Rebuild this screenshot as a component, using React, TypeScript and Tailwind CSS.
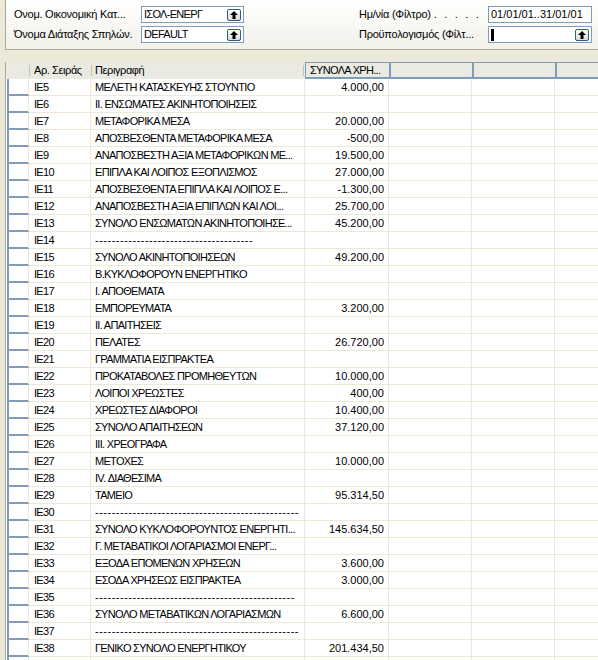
import React from 'react';

type Row = { code: string; text: string; amount?: string };

const rows: Row[] = [
  { code: 'IE5', text: 'ΜΕΛΕΤΗ ΚΑΤΑΣΚΕΥΗΣ ΣΤΟΥΝΤΙΟ', amount: '4.000,00' },
  { code: 'IE6', text: 'II. ΕΝΣΩΜΑΤΕΣ ΑΚΙΝΗΤΟΠΟΙΗΣΕΙΣ' },
  { code: 'IE7', text: 'ΜΕΤΑΦΟΡΙΚΑ ΜΕΣΑ', amount: '20.000,00' },
  { code: 'IE8', text: 'ΑΠΟΣΒΕΣΘΕΝΤΑ ΜΕΤΑΦΟΡΙΚΑ ΜΕΣΑ', amount: '-500,00' },
  { code: 'IE9', text: 'ΑΝΑΠΟΣΒΕΣΤΗ ΑΞΙΑ ΜΕΤΑΦΟΡΙΚΩΝ ΜΕ...', amount: '19.500,00' },
  { code: 'IE10', text: 'ΕΠΙΠΛΑ ΚΑΙ ΛΟΙΠΟΣ ΕΞΟΠΛΙΣΜΟΣ', amount: '27.000,00' },
  { code: 'IE11', text: 'ΑΠΟΣΒΕΣΘΕΝΤΑ ΕΠΙΠΛΑ ΚΑΙ ΛΟΙΠΟΣ Ε...', amount: '-1.300,00' },
  { code: 'IE12', text: 'ΑΝΑΠΟΣΒΕΣΤΗ ΑΞΙΑ ΕΠΙΠΛΩΝ ΚΑΙ ΛΟΙ...', amount: '25.700,00' },
  { code: 'IE13', text: 'ΣΥΝΟΛΟ ΕΝΣΩΜΑΤΩΝ ΑΚΙΝΗΤΟΠΟΙΗΣΕ...', amount: '45.200,00' },
  { code: 'IE14', text: '-'.repeat(38) },
  { code: 'IE15', text: 'ΣΥΝΟΛΟ ΑΚΙΝΗΤΟΠΟΙΗΣΕΩΝ', amount: '49.200,00' },
  { code: 'IE16', text: 'Β.ΚΥΚΛΟΦΟΡΟΥΝ ΕΝΕΡΓΗΤΙΚΟ' },
  { code: 'IE17', text: 'Ι. ΑΠΟΘΕΜΑΤΑ' },
  { code: 'IE18', text: 'ΕΜΠΟΡΕΥΜΑΤΑ', amount: '3.200,00' },
  { code: 'IE19', text: 'ΙΙ. ΑΠΑΙΤΗΣΕΙΣ' },
  { code: 'IE20', text: 'ΠΕΛΑΤΕΣ', amount: '26.720,00' },
  { code: 'IE21', text: 'ΓΡΑΜΜΑΤΙΑ ΕΙΣΠΡΑΚΤΕΑ' },
  { code: 'IE22', text: 'ΠΡΟΚΑΤΑΒΟΛΕΣ ΠΡΟΜΗΘΕΥΤΩΝ', amount: '10.000,00' },
  { code: 'IE23', text: 'ΛΟΙΠΟΙ ΧΡΕΩΣΤΕΣ', amount: '400,00' },
  { code: 'IE24', text: 'ΧΡΕΩΣΤΕΣ ΔΙΑΦΟΡΟΙ', amount: '10.400,00' },
  { code: 'IE25', text: 'ΣΥΝΟΛΟ ΑΠΑΙΤΗΣΕΩΝ', amount: '37.120,00' },
  { code: 'IE26', text: 'ΙΙΙ. ΧΡΕΟΓΡΑΦΑ' },
  { code: 'IE27', text: 'ΜΕΤΟΧΕΣ', amount: '10.000,00' },
  { code: 'IE28', text: 'IV. ΔΙΑΘΕΣΙΜΑ' },
  { code: 'IE29', text: 'ΤΑΜΕΙΟ', amount: '95.314,50' },
  { code: 'IE30', text: '-'.repeat(49) },
  { code: 'IE31', text: 'ΣΥΝΟΛΟ ΚΥΚΛΟΦΟΡΟΥΝΤΟΣ ΕΝΕΡΓΗΤΙ...', amount: '145.634,50' },
  { code: 'IE32', text: 'Γ. ΜΕΤΑΒΑΤΙΚΟΙ ΛΟΓΑΡΙΑΣΜΟΙ ΕΝΕΡΓ...' },
  { code: 'IE33', text: 'ΕΞΟΔΑ ΕΠΟΜΕΝΩΝ ΧΡΗΣΕΩΝ', amount: '3.600,00' },
  { code: 'IE34', text: 'ΕΣΟΔΑ ΧΡΗΣΕΩΣ ΕΙΣΠΡΑΚΤΕΑ', amount: '3.000,00' },
  { code: 'IE35', text: '-'.repeat(48) },
  { code: 'IE36', text: 'ΣΥΝΟΛΟ ΜΕΤΑΒΑΤΙΚΩΝ ΛΟΓΑΡΙΑΣΜΩΝ', amount: '6.600,00' },
  { code: 'IE37', text: '-'.repeat(49) },
  { code: 'IE38', text: 'ΓΕΝΙΚΟ ΣΥΝΟΛΟ ΕΝΕΡΓΗΤΙΚΟΥ', amount: '201.434,50' },
  { code: '', text: '' },
];

function LookupButton() {
  return (
    <span className="flex h-[12px] w-[14px] items-center justify-center rounded-[2px] border border-[#2f5a8c] bg-gradient-to-b from-white to-[#dcdcd4]">
      <svg width="8" height="8" viewBox="0 0 8 8">
        <path d="M4 0 L8 4 L5.5 4 L5.5 8 L2.5 8 L2.5 4 L0 4 Z" fill="#000" />
      </svg>
    </span>
  );
}

function Field({ value, lookup, cursor, width, wide }: { value?: string; lookup?: boolean; cursor?: boolean; width: string; wide?: boolean }) {
  return (
    <div className={`flex h-[17px] items-center justify-between border border-[#7f9db9] bg-white pl-[2px] pr-[2px] ${width}`}>
      <span className={`flex items-center whitespace-nowrap ${wide ? 'tracking-normal' : ''}`}>
        {cursor && <span className="inline-block h-[12px] w-[3px] bg-black" />}
        {value}
      </span>
      {lookup && <LookupButton />}
    </div>
  );
}

function Cell({ w, children, right, last }: { w: string; children?: React.ReactNode; right?: boolean; last?: boolean }) {
  return (
    <div className={`flex h-full items-center overflow-hidden whitespace-nowrap border-b border-[#ece9d8] ${last ? '' : 'border-r'} ${w} ${right ? 'justify-end pr-[4px] tracking-normal' : ''}`}>
      {children}
    </div>
  );
}

export default function App() {
  return (
    <div className="h-[660px] w-[598px] overflow-hidden bg-[#ece9d8] text-[11px] tracking-[-0.7px] text-black" style={{ fontFamily: '"Liberation Sans", Arial, sans-serif' }}>
      <div className="ml-[5px] flex h-[50px] justify-between border-b border-l border-[#a9a89c] bg-gradient-to-b from-white to-[#f2f1ea]">
        <div className="flex flex-col gap-[3px] pl-[8px] pt-[6px]">
          <div className="flex items-center">
            <span className="w-[127px] whitespace-nowrap tracking-[-0.25px]">Ονομ. Οικονομική Κατ...</span>
            <Field value="ΙΣΟΛ-ΕΝΕΡΓ" lookup width="w-[103px]" />
          </div>
          <div className="flex items-center">
            <span className="w-[127px] whitespace-nowrap tracking-[-0.25px]">Όνομα Διάταξης Σπηλών.</span>
            <Field value="DEFAULT" lookup width="w-[103px]" />
          </div>
        </div>
        <div className="flex flex-col gap-[3px] pr-[6px] pt-[6px]">
          <div className="flex items-center">
            <span className="w-[129px] whitespace-nowrap tracking-[-0.25px]">
              Ημ/νία (Φίλτρο)<span className="pl-[3px] tracking-[2.2px]">. . . . .</span>
            </span>
            <Field value="01/01/01..31/01/01" width="w-[104px]" wide />
          </div>
          <div className="flex items-center">
            <span className="w-[129px] whitespace-nowrap tracking-[-0.25px]">Προϋπολογισμός (Φίλτ...</span>
            <Field cursor lookup width="w-[104px]" />
          </div>
        </div>
      </div>

      <div className="h-[12px]" />

      <div className="ml-[5px] border-l border-[#a9a89c] bg-white">
        <div className="flex h-[17px] bg-[#ebeae2]">
          <div className="w-[23px]" />
          <div className="flex w-[62px] items-center">
            <span className="h-[11px] w-px bg-[#c4c2b4]" />
            <span className="pl-[4px] tracking-[-0.4px]">Αρ. Σειράς</span>
          </div>
          <div className="flex w-[214px] items-center">
            <span className="h-[11px] w-px bg-[#c4c2b4]" />
            <span className="pl-[3px] tracking-[-0.4px]">Περιγραφή</span>
            <span className="ml-auto mr-[1px] h-[11px] w-px bg-[#c4c2b4]" />
          </div>
          <div className="flex flex-1 border-b-2 border-t border-[#7f9db9]">
            <div className="flex w-[84px] items-center border-l border-[#7f9db9] pl-[4px]">ΣΥΝΟΛΑ ΧΡΗ...</div>
            <div className="w-[83px] border-l-2 border-[#7f9db9]" />
            <div className="w-[83px] border-l-2 border-[#7f9db9]" />
            <div className="flex-1 border-l-2 border-[#7f9db9]" />
          </div>
        </div>

        {rows.map((r, i) => (
          <div key={i} className="flex h-[17px]">
            <div className="ml-[1px] h-full w-[22px] border-b-2 border-l-2 border-r border-[#7f9db9] border-r-[#ece9d8] bg-white" />
            <Cell w="w-[62px] pl-[5px]">{r.code}</Cell>
            <Cell w="w-[214px] pl-[4px]">
              <span className={r.text.startsWith('-') ? 'tracking-[0.5px]' : ''}>{r.text}</span>
            </Cell>
            <Cell w="w-[84px]" right>{r.amount}</Cell>
            <Cell w="w-[83px]" />
            <Cell w="w-[83px]" />
            <Cell w="flex-1" last />
          </div>
        ))}
      </div>
    </div>
  );
}
